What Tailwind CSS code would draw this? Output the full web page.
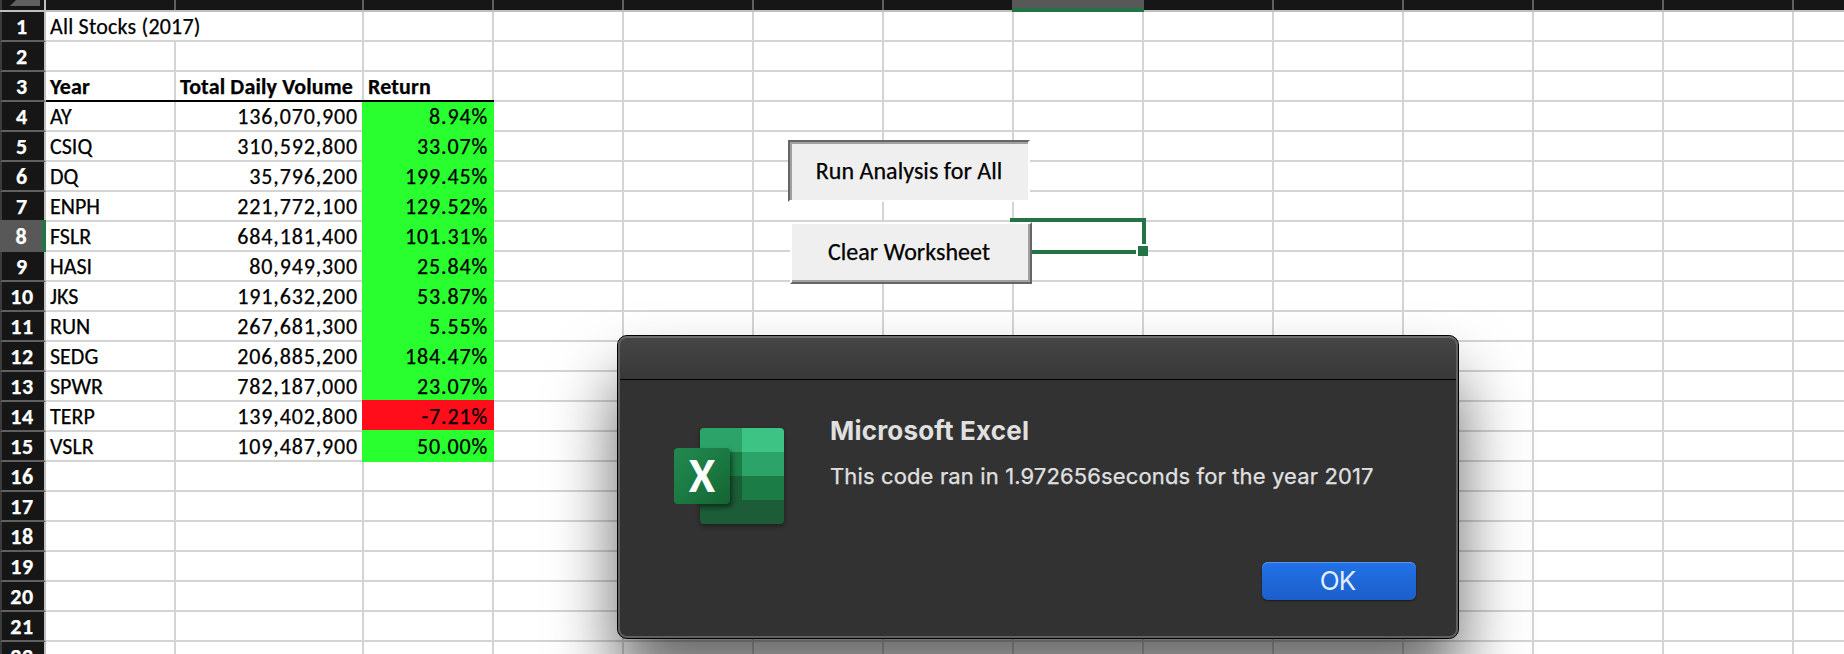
<!DOCTYPE html>
<html lang="en">
<head>
<meta charset="utf-8">
<title>All Stocks (2017)</title>
<script src="https://cdn.jsdelivr.net/npm/@tailwindcss/browser@4"></script>
</head>
<body class="bg-white">
<main class="relative w-[1844px] h-[654px] overflow-hidden bg-white font-[Carlito,Calibri,Lato,sans-serif] text-[22px] leading-[30px] text-black whitespace-nowrap">

  <!-- Column headers -->
  <div class="flex h-3 w-[1924px] border-b-2 border-[#bfbfbf] bg-[#161616]">
    <div class="flex w-[46px] shrink-0 justify-end border-r-2 border-[#bfbfbf] border-l-2 border-l-[#3c3c3c] pr-1">
      <svg class="h-1.5 w-[30px]" viewBox="0 0 30 6"><path d="M0 6L6 0H30V6Z" fill="#606060"/></svg>
    </div>
    <div id="cols" class="flex"></div>
  </div>

  <!-- Rows -->
  <div id="rows" class="[-webkit-text-stroke:0.25px]"></div>

  <!-- Active cell -->
  <div class="absolute left-[1010px] top-[218px] h-9 w-[136px] border-4 border-[#237346]"></div>
  <div class="absolute left-[1136px] top-[244px] size-3 border-t-2 border-l-2 border-white bg-[#237346]"></div>

  <!-- Form buttons -->
  <button class="absolute left-[788px] top-[140px] h-[62px] w-[242px] border-2 border-t-[#666] border-l-[#666] border-r-white border-b-white bg-[#efefef] text-[24px] tracking-[0.050px] shadow-[inset_2px_2px_0_#a0a0a0] [-webkit-text-stroke:0.25px]">Run Analysis for All</button>
  <button class="absolute left-[790px] top-[222px] h-[62px] w-[242px] border-2 border-t-white border-l-white border-r-[#666] border-b-[#666] bg-[#efefef] pr-1 pb-[3px] text-[24px] tracking-[0.050px] shadow-[inset_-2px_-2px_0_#a0a0a0] [-webkit-text-stroke:0.25px]">Clear Worksheet</button>

  <!-- Message box -->
  <section class="absolute left-[617px] top-[335px] h-[304px] w-[842px] rounded-[10px] border border-black bg-[#323232] font-[Inter,sans-serif] text-[#e0e0e0] shadow-[0_44px_66px_rgba(0,0,0,0.6)]">
    <div class="h-11 rounded-t-[9px] border-b border-black bg-linear-to-b from-[#464646] to-[#383838]"></div>
    <div class="flex pt-[47px] pl-[54px]">
      <svg class="h-[104px] w-[116px] shrink-0" viewBox="0 0 116 104">
        <defs>
          <linearGradient id="tile" x1="0" y1="0" x2="1" y2="1"><stop offset="0" stop-color="#21884f"/><stop offset=".5" stop-color="#1b7a43"/><stop offset="1" stop-color="#14632f"/></linearGradient>
          <clipPath id="book"><rect x="28" y="1" width="84" height="96" rx="4"/></clipPath>
          <filter id="soft" x="-20%" y="-20%" width="150%" height="150%"><feGaussianBlur stdDeviation="2.5"/></filter>
        </defs>
        <rect x="28" y="3" width="84" height="96" rx="4" fill="#000" opacity=".4" filter="url(#soft)"/>
        <g clip-path="url(#book)">
          <rect x="28" y="1" width="84" height="96" fill="#1c5c37"/>
          <rect x="28" y="1" width="42" height="24" fill="#2ca369"/>
          <rect x="70" y="1" width="42" height="24" fill="#3dc485"/>
          <rect x="28" y="25" width="42" height="24" fill="#1b7c45"/>
          <rect x="70" y="25" width="42" height="24" fill="#2ca369"/>
          <rect x="70" y="49" width="42" height="24" fill="#1b7c45"/>
          <rect x="4" y="24" width="56" height="56" rx="4" fill="#000" opacity=".5" filter="url(#soft)"/>
        </g>
        <rect x="2" y="21" width="56" height="56" rx="4" fill="url(#tile)"/>
        <text x="30" y="64.500" text-anchor="middle" font-family="Carlito, Calibri, Lato, sans-serif" font-weight="700" font-size="48" fill="#fff">X</text>
      </svg>
      <div class="pl-[42px]">
        <h1 class="mt-[-12px] text-[26px] leading-8 font-bold tracking-[0.200px]">Microsoft Excel</h1>
        <p class="mt-[13px] text-[22px] leading-8 tracking-[0.130px] [-webkit-text-stroke:0.25px]">This code ran in 1.972656seconds for the year 2017</p>
      </div>
    </div>
    <div class="flex justify-end pt-[31px] pr-[42px]">
      <button class="h-[38px] w-[154px] rounded-md bg-linear-to-b from-[#2272e8] to-[#1c5fcb] pr-[3px] text-[26px] leading-[38px] tracking-[-0.900px] text-[#e4edfb] shadow-[inset_0_1px_0_#5a95ee,0_1px_2px_rgba(0,0,0,0.5)]">OK</button>
    </div>
    <!-- Light inner rim -->
    <div class="pointer-events-none absolute inset-0 rounded-[9px] border-2 border-[#606060] border-t-[#6c6e6b]"></div>
  </section>
</main>

<script>
  const data = {
    4: ['AY', '136,070,900', '8.94%'], 5: ['CSIQ', '310,592,800', '33.07%'], 6: ['DQ', '35,796,200', '199.45%'],
    7: ['ENPH', '221,772,100', '129.52%'], 8: ['FSLR', '684,181,400', '101.31%'], 9: ['HASI', '80,949,300', '25.84%'],
    10: ['JKS', '191,632,200', '53.87%'], 11: ['RUN', '267,681,300', '5.55%'], 12: ['SEDG', '206,885,200', '184.47%'],
    13: ['SPWR', '782,187,000', '23.07%'], 14: ['TERP', '139,402,800', '-7.21%'], 15: ['VSLR', '109,487,900', '50.00%'],
  };

  let cols = '';
  for (let c = 0; c < 14; c++) {
    if (c === 7) cols += '<div class="z-10 h-3 w-[132px] shrink-0 border-b-4 border-[#237346] bg-[#585858]"></div>';
    else if (c === 6) cols += '<div class="h-2.5 w-[128px] shrink-0"></div>';
    else if (c === 1) cols += '<div class="h-2.5 w-[188px] shrink-0 border-r-2 border-[#606060]"></div>';
    else cols += '<div class="h-2.5 w-[130px] shrink-0 border-r-2 border-[#606060]"></div>';
  }
  document.getElementById('cols').innerHTML = cols;

  let rows = '';
  for (let n = 1; n <= 22; n++) {
    const d = data[n];
    const head = n === 8
      ? '<div class="z-10 -mt-0.5 w-[46px] shrink-0 border-r-4 border-[#237346] bg-[#585858] pt-0.5 pl-px text-center font-bold tracking-[0.700px] text-white">8</div>'
      : '<div class="w-[46px] shrink-0 border-r-2 border-r-[#bfbfbf] border-b-2 border-b-[#606060] border-l-2 border-l-[#3c3c3c] bg-[#161616] pr-0.5 text-center font-bold tracking-[0.700px] text-white">' + n + '</div>';
    let a = '', b = '', c = '';
    if (n === 1) {
      a = '<div class="w-[318px] shrink-0 border-r-2 border-b-2 border-[#d4d4d4] pl-1 tracking-[0.200px]">All Stocks (2017)</div>';
    } else if (n === 3) {
      a = '<div class="z-10 h-7 w-[130px] shrink-0 border-r-2 border-[#d4d4d4] pl-1 font-bold tracking-[0.150px] shadow-[0_2px_0_#000]">Year</div>';
      b = '<div class="z-10 h-7 w-[188px] shrink-0 border-r-2 border-[#d4d4d4] pl-1 font-bold tracking-[0.150px] shadow-[0_2px_0_#000]">Total Daily Volume</div>';
      c = '<div class="z-10 h-7 w-[130px] shrink-0 border-r-2 border-[#d4d4d4] pl-1 font-bold tracking-[0.150px] shadow-[0_2px_0_#000]">Return</div>';
    } else {
      a = '<div class="w-[130px] shrink-0 border-r-2 border-b-2 border-[#d4d4d4] pl-1">' + (d ? d[0] : '') + '</div>';
      b = '<div class="w-[188px] shrink-0 border-r-2 border-b-2 border-[#d4d4d4] pr-1 text-right tracking-[0.850px]">' + (d ? d[1] : '') + '</div>';
    }
    if (n === 4) c = '<div class="z-10 -ml-0.5 w-[132px] shrink-0 bg-[#29ff2f] pr-1.5 text-right tracking-[0.850px]">' + d[2] + '</div>';
    else if (n === 14) c = '<div class="z-10 -mt-0.5 -ml-0.5 w-[132px] shrink-0 bg-[#ff0d1b] pt-0.5 pr-1.5 text-right tracking-[0.850px]">' + d[2] + '</div>';
    else if (d) c = '<div class="z-10 -mt-0.5 -ml-0.5 w-[132px] shrink-0 bg-[#29ff2f] pt-0.5 pr-1.5 text-right tracking-[0.850px]">' + d[2] + '</div>';
    else if (n !== 3) c = '<div class="w-[130px] shrink-0 border-r-2 border-b-2 border-[#d4d4d4]"></div>';
    let rest = '';
    for (let k = 0; k < 11; k++) rest += '<div class="w-[130px] shrink-0 border-r-2 border-b-2 border-[#d4d4d4]"></div>';
    rows += '<div class="flex h-[30px]">' + head + a + b + c + rest + '</div>';
  }
  document.getElementById('rows').innerHTML = rows;
</script>
</body>
</html>
